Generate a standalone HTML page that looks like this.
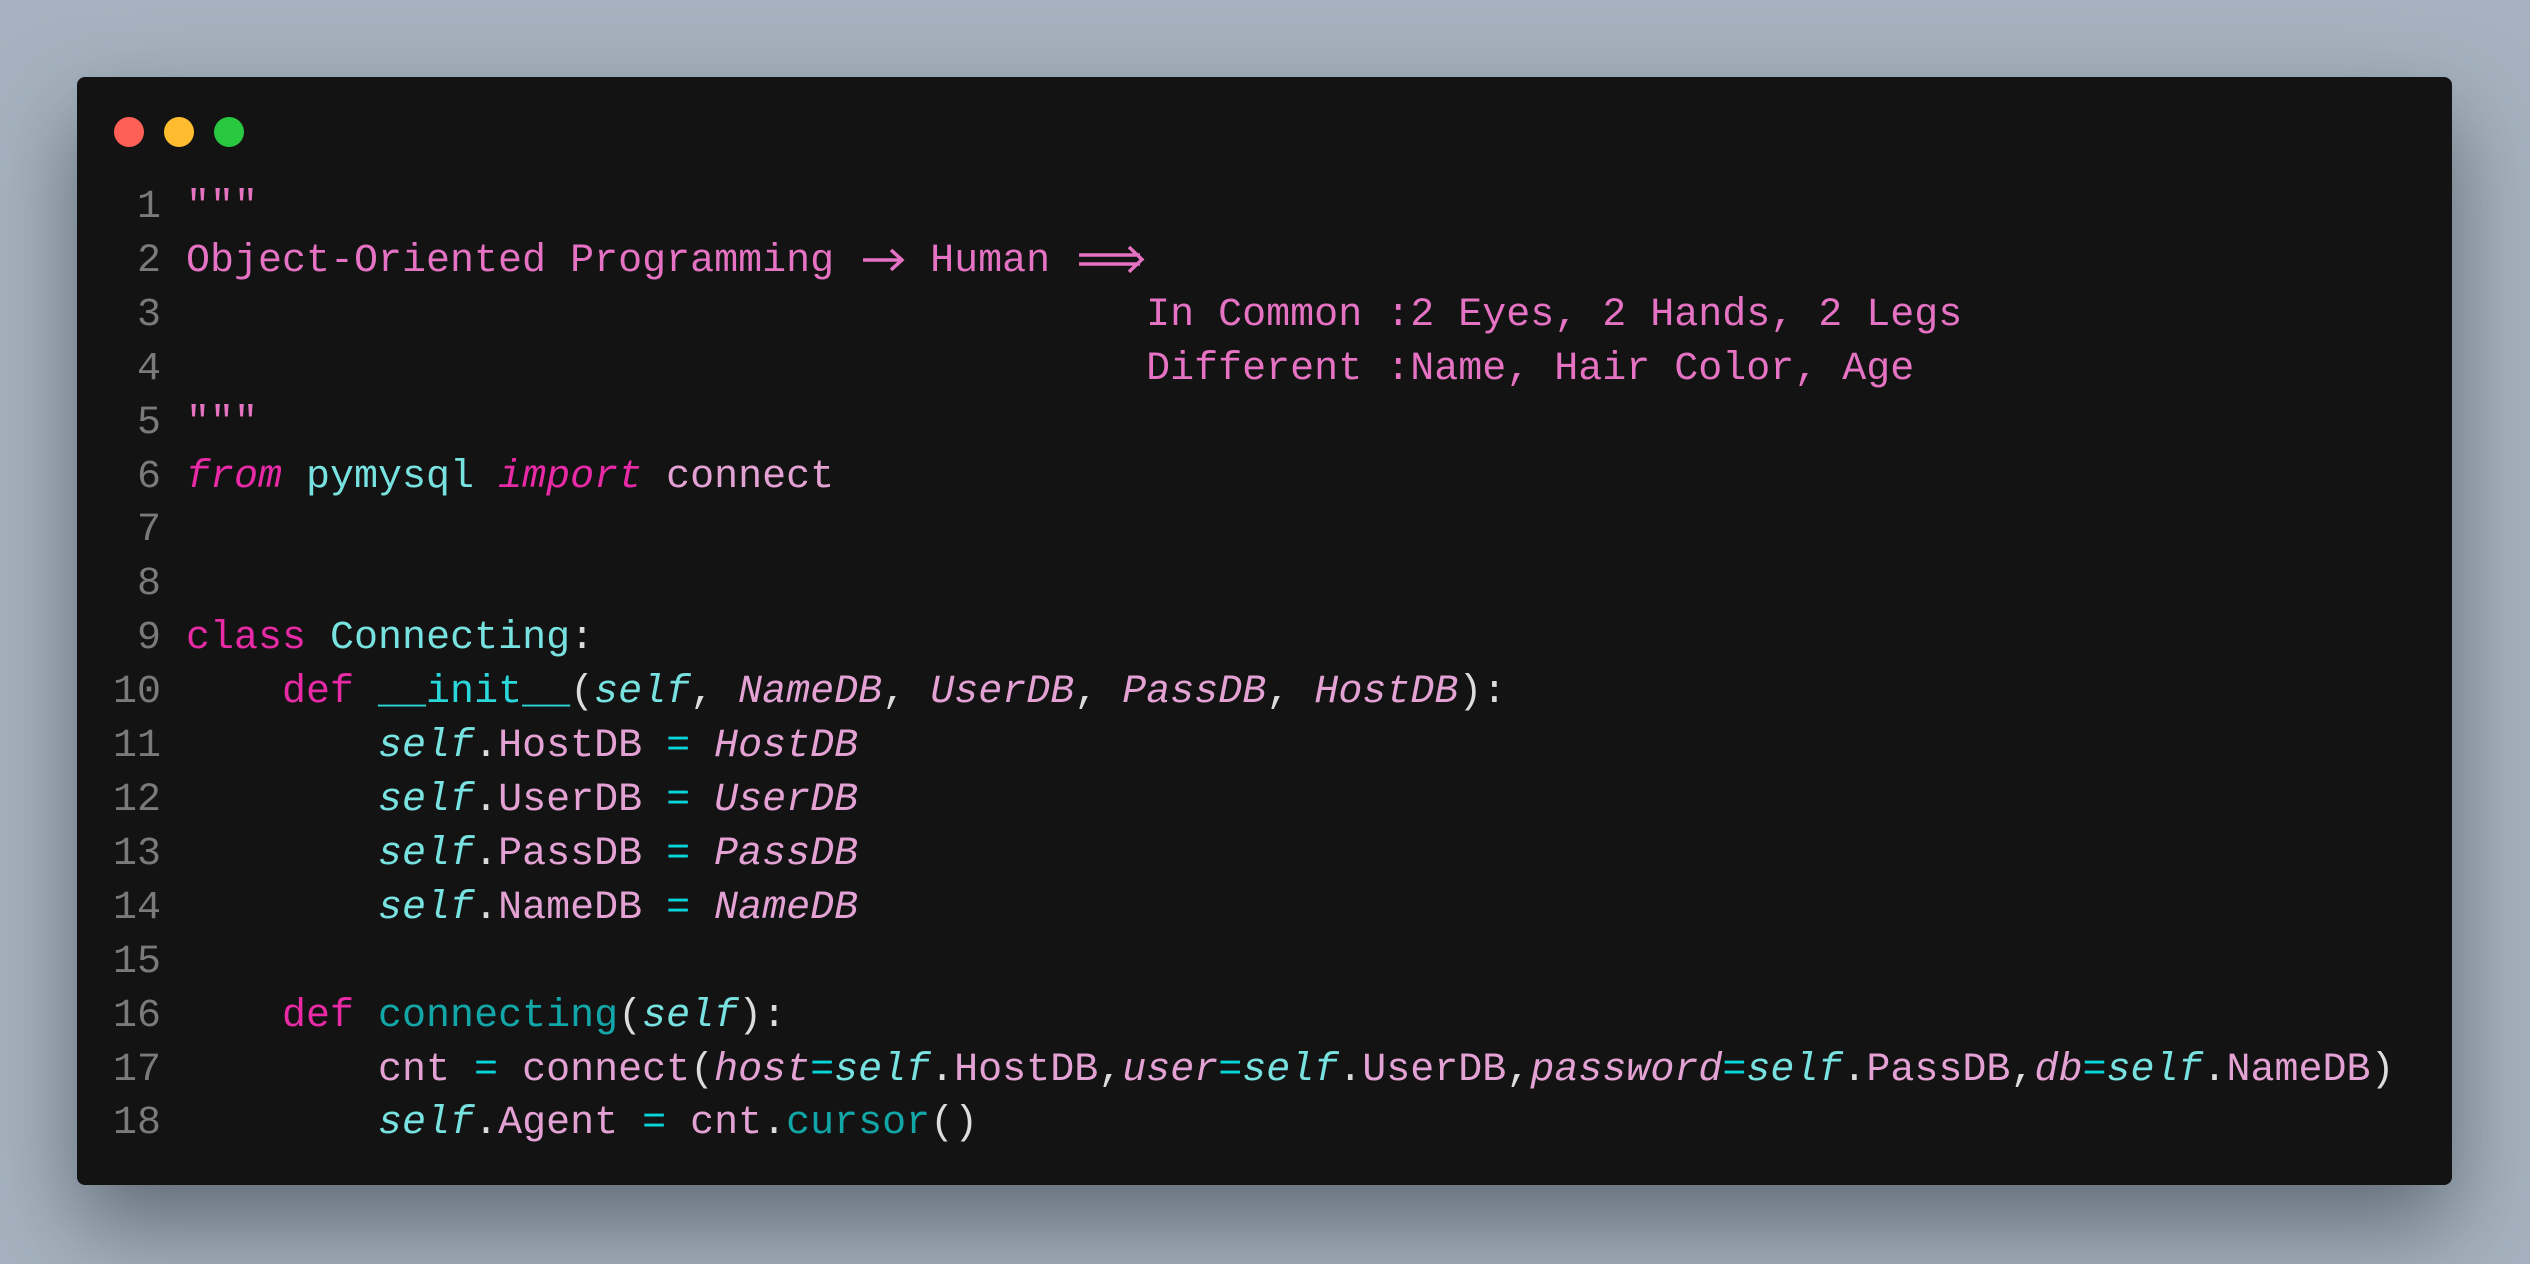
<!DOCTYPE html>
<html><head><meta charset="utf-8"><style>
html,body{margin:0;padding:0;}
body{width:2530px;height:1264px;background:#a6b2bf;position:relative;overflow:hidden;}
.win{position:absolute;left:77px;top:77px;width:2375px;height:1108px;background:#131313;border-radius:8px;box-shadow:0 40px 90px rgba(40,50,60,0.55);}
.dot{position:absolute;top:40px;width:30px;height:30px;border-radius:50%;}
.code{position:absolute;left:0;top:104px;font-family:"Liberation Mono","DejaVu Sans Mono",monospace;font-size:40px;line-height:53.9px;white-space:pre;color:#e4a2d4;}
.ln{display:inline-block;width:84px;text-align:right;color:#7a7a7a;margin-right:25px;}
.s{color:#e572c2}.k{color:#e82aa6}.kf{color:#e82aa6;font-style:italic}.c{color:#78e2e0}.sf{color:#78e2e0;font-style:italic}
.t{color:#12a6a8}.f{color:#2ad8dc}.p{color:#dcdcdc}.o{color:#08d6da}.i{font-style:italic;color:#e4a2d4}
svg.a{display:inline-block;vertical-align:top;height:53.9px}
</style></head><body>
<div class="win">
<div class="dot" style="left:37px;background:#fe5f57"></div>
<div class="dot" style="left:87px;background:#febc2e"></div>
<div class="dot" style="left:137px;background:#28c840"></div>
<div class="code"><div><span class="ln">1</span><span class="s">"""</span></div><div><span class="ln">2</span><span class="s">Object-Oriented Programming <svg class="a" width="48" height="54" viewBox="0 0 48 54"><path d="M5 25H44M33 15L44 25L33 35" stroke="#e572c2" stroke-width="3.5" fill="none"/></svg> Human <svg class="a" width="72" height="54" viewBox="0 0 72 54"><path d="M5 20H66M5 29H66M55 12L68 24.5L55 37" stroke="#e572c2" stroke-width="3.5" fill="none"/></svg></span></div><div><span class="ln">3</span><span class="s">                                        In Common :2 Eyes, 2 Hands, 2 Legs</span></div><div><span class="ln">4</span><span class="s">                                        Different :Name, Hair Color, Age</span></div><div><span class="ln">5</span><span class="s">"""</span></div><div><span class="ln">6</span><span class="kf">from</span> <span class="c">pymysql</span> <span class="kf">import</span> connect</div><div><span class="ln">7</span></div><div><span class="ln">8</span></div><div><span class="ln">9</span><span class="k">class</span> <span class="c">Connecting</span><span class="p">:</span></div><div><span class="ln">10</span>    <span class="k">def</span> <span class="f">__init__</span><span class="p">(</span><span class="sf">self</span><span class="p">,</span> <span class="i">NameDB</span><span class="p">,</span> <span class="i">UserDB</span><span class="p">,</span> <span class="i">PassDB</span><span class="p">,</span> <span class="i">HostDB</span><span class="p">):</span></div><div><span class="ln">11</span>        <span class="sf">self</span><span class="p">.</span>HostDB <span class="o">=</span> <span class="i">HostDB</span></div><div><span class="ln">12</span>        <span class="sf">self</span><span class="p">.</span>UserDB <span class="o">=</span> <span class="i">UserDB</span></div><div><span class="ln">13</span>        <span class="sf">self</span><span class="p">.</span>PassDB <span class="o">=</span> <span class="i">PassDB</span></div><div><span class="ln">14</span>        <span class="sf">self</span><span class="p">.</span>NameDB <span class="o">=</span> <span class="i">NameDB</span></div><div><span class="ln">15</span></div><div><span class="ln">16</span>    <span class="k">def</span> <span class="t">connecting</span><span class="p">(</span><span class="sf">self</span><span class="p">):</span></div><div><span class="ln">17</span>        cnt <span class="o">=</span> connect<span class="p">(</span><span class="i">host</span><span class="o">=</span><span class="sf">self</span><span class="p">.</span>HostDB<span class="p">,</span><span class="i">user</span><span class="o">=</span><span class="sf">self</span><span class="p">.</span>UserDB<span class="p">,</span><span class="i">password</span><span class="o">=</span><span class="sf">self</span><span class="p">.</span>PassDB<span class="p">,</span><span class="i">db</span><span class="o">=</span><span class="sf">self</span><span class="p">.</span>NameDB<span class="p">)</span></div><div><span class="ln">18</span>        <span class="sf">self</span><span class="p">.</span>Agent <span class="o">=</span> cnt<span class="p">.</span><span class="t">cursor</span><span class="p">()</span></div></div>
</div>
</body></html>
